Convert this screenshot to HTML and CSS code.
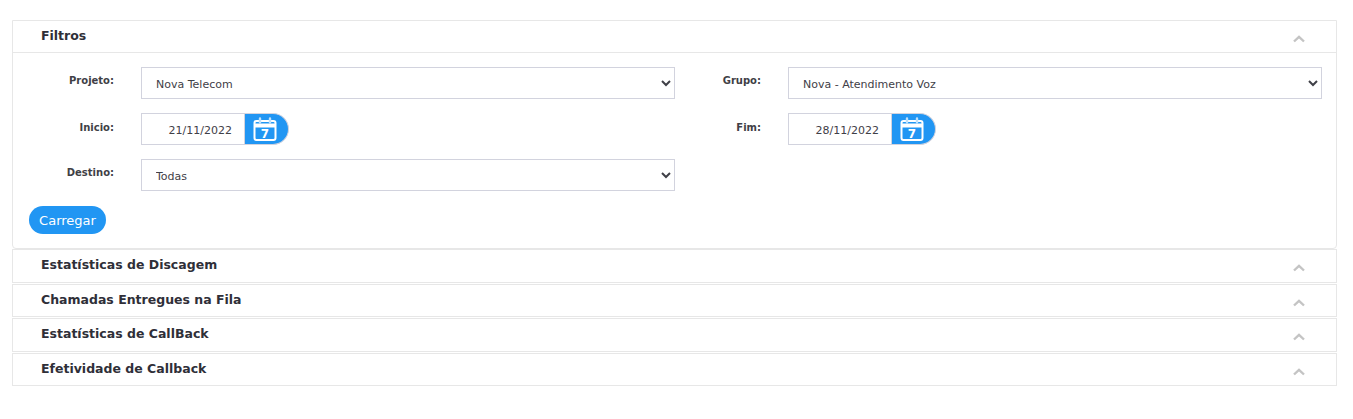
FILE: index.html
```html
<!DOCTYPE html>
<html lang="pt">
<head>
<meta charset="utf-8">
<title>Filtros</title>
<link rel="stylesheet" href="styles.css">
</head>
<body>
<main class="accordion">
  <section class="panel panel-open">
    <header class="panel-head">
      <h2 class="panel-title">Filtros</h2>
      <svg class="chev" viewBox="0 0 12 8" width="12" height="8"><path d="M1 6.5 6 1.8l5 4.7" fill="none" stroke="#c4c4c4" stroke-width="2.4"/></svg>
    </header>
    <form class="panel-body">
      <div class="grid">
        <div class="field"><label class="lbl">Projeto:</label><select class="ctl"><option>Nova Telecom</option></select></div>
        <div class="field"><label class="lbl">Grupo:</label><select class="ctl"><option>Nova - Atendimento Voz</option></select></div>
        <div class="field"><label class="lbl lbl-date">Inicio:</label>
          <div class="date"><input class="date-input" value="21/11/2022"><span class="date-btn">
            <svg viewBox="0 0 24 24" width="24" height="24"><rect x="1.5" y="4" width="21" height="19" rx="2" fill="none" stroke="#fff" stroke-width="2"/><path d="M1.5 8.5h21" stroke="#fff" stroke-width="4"/><path d="M7 1.5v4M17 1.5v4" stroke="#bfe0fb" stroke-width="2.4" stroke-linecap="round"/><text x="12" y="20.5" class="cal-num">7</text></svg>
          </span></div></div>
        <div class="field"><label class="lbl lbl-date">Fim:</label>
          <div class="date"><input class="date-input" value="28/11/2022"><span class="date-btn">
            <svg viewBox="0 0 24 24" width="24" height="24"><rect x="1.5" y="4" width="21" height="19" rx="2" fill="none" stroke="#fff" stroke-width="2"/><path d="M1.5 8.5h21" stroke="#fff" stroke-width="4"/><path d="M7 1.5v4M17 1.5v4" stroke="#bfe0fb" stroke-width="2.4" stroke-linecap="round"/><text x="12" y="20.5" class="cal-num">7</text></svg>
          </span></div></div>
        <div class="field"><label class="lbl">Destino:</label><select class="ctl"><option>Todas</option></select></div>
      </div>
      <button type="button" class="btn">Carregar</button>
    </form>
  </section>
  <section class="panel"><header class="panel-head"><h2 class="panel-title">Estatísticas de Discagem</h2><svg class="chev" viewBox="0 0 12 8" width="12" height="8"><path d="M1 6.5 6 1.8l5 4.7" fill="none" stroke="#c4c4c4" stroke-width="2.4"/></svg></header></section>
  <section class="panel"><header class="panel-head"><h2 class="panel-title">Chamadas Entregues na Fila</h2><svg class="chev" viewBox="0 0 12 8" width="12" height="8"><path d="M1 6.5 6 1.8l5 4.7" fill="none" stroke="#c4c4c4" stroke-width="2.4"/></svg></header></section>
  <section class="panel"><header class="panel-head"><h2 class="panel-title">Estatísticas de CallBack</h2><svg class="chev" viewBox="0 0 12 8" width="12" height="8"><path d="M1 6.5 6 1.8l5 4.7" fill="none" stroke="#c4c4c4" stroke-width="2.4"/></svg></header></section>
  <section class="panel"><header class="panel-head"><h2 class="panel-title">Efetividade de Callback</h2><svg class="chev" viewBox="0 0 12 8" width="12" height="8"><path d="M1 6.5 6 1.8l5 4.7" fill="none" stroke="#c4c4c4" stroke-width="2.4"/></svg></header></section>
</main>
</body>
</html>
```
FILE: styles.css
```css
* { box-sizing: border-box; }
html, body { margin: 0; background: #fff; }
body { font-family: "DejaVu Sans", Verdana, sans-serif; color: #3f4047; }
.accordion { width: 1325px; margin: 20px 0 0 12px; }
.panel { border: 1px solid #e7e7e7; height: 33.4px; margin-top: 1px; }
.panel-open { height: 229px; margin-top: 0; border-radius: 0 0 4px 4px; }
.panel-open + .panel { height: 34px; margin-top: 0; }
.panel-head { height: 31px; padding: 0 31px 2px 28px; display: flex; align-items: center; justify-content: space-between; }
.panel-open .panel-head { height: 32px; border-bottom: 1px solid #e7e7e7; }
.panel-title { margin: 0; font-size: 12.5px; font-weight: 700; color: #2f2f38; }
.chev { margin-top: 7px; }
.panel-body { padding: 14px 14px 0 16px; }
.grid { display: grid; grid-template-columns: 647px 1fr; row-gap: 14px; }
.field { display: flex; }
.lbl { width: 85px; margin-right: 27px; padding-top: 8px; text-align: right; font-size: 10px; font-weight: 700; color: #3f3f46; }
.lbl-date { padding-top: 9px; }
.ctl { flex: 0 0 534px; height: 32px; border: 1px solid #d2d3de; border-radius: 0; background: #fff; font: 11px "DejaVu Sans", sans-serif; color: #3f4047; padding: 3px 10px 0; }
.date { display: flex; height: 32px; }
.date-input { width: 104px; height: 32px; border: 1px solid #d2d3de; text-align: right; font: 11px "DejaVu Sans", sans-serif; color: #3f4047; padding: 2px 12px 0 0; outline: 0; }
.date-btn { width: 44px; height: 32px; background: #2196f3; border: 1px solid #d2d3de; border-left: 0; border-radius: 0 16px 16px 0; display: flex; align-items: center; justify-content: center; padding-right: 3px; }
.cal-num { font: 700 12px "DejaVu Sans", sans-serif; fill: #fff; text-anchor: middle; }
.btn { display: block; margin-top: 15px; width: 77px; height: 28px; border: 0; border-radius: 14px; background: #2196f3; color: #fff; font: 13px "DejaVu Sans", sans-serif; padding: 0; }
```
